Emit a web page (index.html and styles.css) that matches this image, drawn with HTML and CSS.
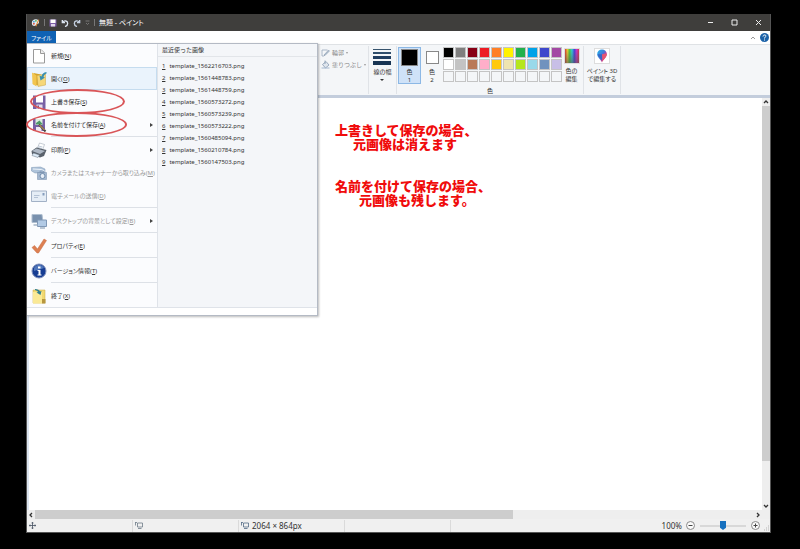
FILE: index.html
```html
<!DOCTYPE html>
<html lang="ja">
<head>
<meta charset="utf-8">
<title>無題 - ペイント</title>
<link rel="stylesheet" href="styles.css">
</head>
<body>
<div class="window">
  <header class="titlebar">
    <svg class="app-icon" width="9" height="9" viewBox="0 0 22 22"><path d="M2 12C2 5 8 2 13 3c6 1 8 6 6 10-2 3-5 1-6 3-1 3-3 4-6 3-3 0-5-3-5-7z" fill="#e4ecf2"/><circle cx="7" cy="9" r="2.2" fill="#47a2d9"/><circle cx="12" cy="7" r="2.2" fill="#4fae52"/><circle cx="7" cy="14" r="2.2" fill="#d9503f"/><path d="M12 20l7-16" stroke="#e58b35" stroke-width="2.5"/></svg>
    <span class="tick"></span>
    <button class="quick" aria-label="上書き保存"><svg width="8" height="8" viewBox="0 0 16 16"><path d="M1 1h14v14H1z" fill="#7b5da6"/><path d="M3 1h10v7H3z" fill="#fff"/><path d="M4 10h8v5H4z" fill="#ded5ea"/></svg></button>
    <button class="quick" aria-label="元に戻す"><svg width="8" height="8" viewBox="0 0 18 18"><path d="M3 2v6h6M3 8c5-6 12-4 12 2 0 4-3 6-6 7" fill="none" stroke="#dce5f1" stroke-width="3"/></svg></button>
    <button class="quick" aria-label="やり直し"><svg width="8" height="8" viewBox="0 0 18 18"><path d="M15 2v6H9M15 8C10 2 3 4 3 10c0 4 3 6 6 7" fill="none" stroke="#c3cfdf" stroke-width="3"/></svg></button>
    <button class="quick" aria-label="カスタマイズ"><svg width="5" height="7" viewBox="0 0 10 14"><path d="M1 4h8M2 8l3 3 3-3" fill="none" stroke="#8d8d8d" stroke-width="1.4"/></svg></button>
    <span class="tick"></span>
    <h1 class="title">無題 - ペイント</h1>
    <div class="window-buttons">
      <button aria-label="最小化"><svg width="7" height="7" viewBox="0 0 7 7"><path d="M1 3.5h5" stroke="#eee"/></svg></button>
      <button aria-label="最大化"><svg width="7" height="7" viewBox="0 0 7 7"><path d="M1 1h5v5H1z" fill="none" stroke="#eee"/></svg></button>
      <button aria-label="閉じる"><svg width="7" height="7" viewBox="0 0 7 7"><path d="M1 1l5 5M6 1L1 6" stroke="#eee"/></svg></button>
    </div>
  </header>

  <div class="tabs">
    <button class="file-tab">ファイル</button>
    <button class="collapse" aria-label="リボンの最小化"><svg width="6" height="6" viewBox="0 0 6 6"><path d="M1 4l2-2 2 2" fill="none" stroke="#999"/></svg></button>
    <button class="help" aria-label="ヘルプ"><svg width="9" height="9" viewBox="0 0 18 18"><circle cx="9" cy="9" r="9" fill="#1b62a8"/><path d="M6 7c0-4 6-4 6-1 0 2-3 2-3 5M9 13v2" fill="none" stroke="#fff" stroke-width="2"/></svg></button>
  </div>

  <div class="ribbon">
    <div class="group shape-group">
      <button class="mini"><svg width="9" height="9" viewBox="0 0 18 18"><path d="M2 4h11M2 4v12h4l8-9" fill="none" stroke="#9aa9bb" stroke-width="1.6"/><path d="M6 14L15 4l2 2-9 9z" fill="#b7c4d3" stroke="#8394a9"/></svg>輪郭<i class="down"></i></button>
      <button class="mini"><svg width="9" height="9" viewBox="0 0 18 18"><path d="M3 9l7-6 6 7-7 6z" fill="#dfe6ee" stroke="#8799b0" stroke-width="1.6"/><path d="M1 15h16v2H1z" fill="#a3b6ce"/><path d="M8 8V1" stroke="#8799b0" stroke-width="1.6"/></svg>塗りつぶし<i class="down"></i></button>
    </div>
    <div class="group line-group">
      <button class="tool"><svg width="18" height="17" viewBox="0 0 18 17"><path d="M0 1.5h18" stroke="#37546d"/><path d="M0 5h18" stroke="#304e6c" stroke-width="2"/><path d="M0 9.500h18" stroke="#203d60" stroke-width="3"/><path d="M0 15h18" stroke="#183453" stroke-width="4"/></svg><span>線の幅</span><i class="down dark"></i></button>
    </div>
    <div class="group color-group">
      <div class="color-tools">
        <button class="tool color-one"><i class="current black"></i><span>色<br>1</span></button>
        <button class="tool color-two"><i class="current white"></i><span>色<br>2</span></button>
        <div class="palette">
          <button class="c1" aria-label="黒"></button><button class="c2" aria-label="灰色"></button><button class="c3" aria-label="暗い赤"></button><button class="c4" aria-label="赤"></button><button class="c5" aria-label="オレンジ"></button><button class="c6" aria-label="黄"></button><button class="c7" aria-label="緑"></button><button class="c8" aria-label="青緑"></button><button class="c9" aria-label="青"></button><button class="c10" aria-label="紫"></button>
          <button class="c11" aria-label="白"></button><button class="c12" aria-label="薄い灰色"></button><button class="c13" aria-label="茶"></button><button class="c14" aria-label="ピンク"></button><button class="c15" aria-label="金"></button><button class="c16" aria-label="薄い黄"></button><button class="c17" aria-label="黄緑"></button><button class="c18" aria-label="水色"></button><button class="c19" aria-label="青灰色"></button><button class="c20" aria-label="薄紫"></button>
          <button aria-label="空き"></button><button aria-label="空き"></button><button aria-label="空き"></button><button aria-label="空き"></button><button aria-label="空き"></button><button aria-label="空き"></button><button aria-label="空き"></button><button aria-label="空き"></button><button aria-label="空き"></button><button aria-label="空き"></button>
        </div>
        <button class="tool edit-color"><i class="spectrum"></i><span>色の<br>編集</span></button>
      </div>
      <span class="group-label">色</span>
    </div>
    <div class="group paint-group">
      <button class="tool"><svg class="paint3d" width="16" height="16" viewBox="0 0 32 32"><defs><linearGradient id="drop" x1="0" y1="0" x2="1" y2="1"><stop offset="0" stop-color="#20b8ed"/><stop offset=".45" stop-color="#4279d8"/><stop offset=".6" stop-color="#b53ea9"/><stop offset="1" stop-color="#ed6947"/></linearGradient></defs><path d="M16 31C14 24 5 20 5 12a11 11 0 0122 0c0 8-9 12-11 19z" fill="url(#drop)"/><path d="M16 12l11-2c0 9-7 13-10 18z" fill="#e45672"/><path d="M6 12h10v15C13 21 7 18 6 12z" fill="#3568c6"/></svg><span>ペイント 3D<br>で編集する</span></button>
    </div>
  </div>

  <main class="workspace">
    <div class="canvas">
      <div class="note note-save">上書きして保存の場合、<br><span class="second">元画像は消えます</span></div>
      <div class="note note-as">名前を付けて保存の場合、<br><span class="second">元画像も残します。</span></div>
    </div>
    <div class="vscroll">
      <button aria-label="上へ"><svg width="6" height="6" viewBox="0 0 6 6"><path d="M1 4l2-2 2 2" fill="none" stroke="#333" stroke-width="1.3"/></svg></button>
      <div class="vthumb"></div>
      <button aria-label="下へ"><svg width="6" height="6" viewBox="0 0 6 6"><path d="M1 2l2 2 2-2" fill="none" stroke="#333" stroke-width="1.3"/></svg></button>
    </div>
    <div class="hscroll">
      <button aria-label="左へ"><svg width="6" height="6" viewBox="0 0 6 6"><path d="M4 1L2 3l2 2" fill="none" stroke="#333" stroke-width="1.3"/></svg></button>
      <div class="hthumb"></div>
      <button aria-label="右へ"><svg width="6" height="6" viewBox="0 0 6 6"><path d="M2 1l2 2-2 2" fill="none" stroke="#333" stroke-width="1.3"/></svg></button>
    </div>
  </main>

  <footer class="status">
    <div class="cell"><svg width="7" height="7" viewBox="0 0 14 14"><path d="M7 0v14M0 7h14M5 2h4M5 12h4M2 5v4M12 5v4" stroke="#465262" stroke-width="1.6"/></svg></div>
    <div class="cell"><svg width="8" height="7" viewBox="0 0 16 14"><path d="M5 2h10v8H5zM1 1v6M0 1h4M6 13h7" fill="none" stroke="#667482" stroke-width="1.5"/></svg></div>
    <div class="cell"><svg width="8" height="7" viewBox="0 0 16 14"><path d="M5 2h10v8H5zM1 1v6M0 1h4M6 13h7" fill="none" stroke="#49637f" stroke-width="1.5"/></svg><span>2064 × 864px</span></div>
    <div class="cell"></div>
    <div class="zoom">
      <label for="zoom">100%</label>
      <button aria-label="縮小"><svg width="9" height="9" viewBox="0 0 9 9"><circle cx="4.500" cy="4.500" r="4" fill="#fafafa" stroke="#8a8a8a"/><path d="M2.500 4.500h4" stroke="#444"/></svg></button>
      <input id="zoom" type="range" min="0" max="100" value="50">
      <button aria-label="拡大"><svg width="9" height="9" viewBox="0 0 9 9"><circle cx="4.500" cy="4.500" r="4" fill="#fafafa" stroke="#8a8a8a"/><path d="M2.500 4.500h4M4.500 2.500v4" stroke="#444"/></svg></button>
      <svg class="grip" width="6" height="6" viewBox="0 0 6 6"><path d="M4 1h1M2 3h1M4 3h1M0 5h1M2 5h1M4 5h1" stroke="#b5b5b5"/></svg>
    </div>
  </footer>

  <div class="file-menu">
    <nav class="commands">
      <button><svg viewBox="0 0 32 32"><path d="M5 3h15l7 7v20H5z" fill="#fff" stroke="#999" stroke-width="2"/><path d="M19 3v8h8" fill="#eee" stroke="#999" stroke-width="2"/></svg><span>新規(<u>N</u>)</span></button>
      <button class="selected"><svg viewBox="0 0 32 32"><path d="M5 4l15 3v23L5 27z" fill="#d6a428"/><path d="M12 9l17-3v22l-15 3z" fill="#f6d779" stroke="#c9a345"/><path d="M2 3l9 6v22l-8-5z" fill="#f2c550"/><path d="M31 2c-6 1-9 4-10 9l-4-2 2 10 9-6-3-1c1-4 3-6 6-7z" fill="#398fae"/></svg><span>開く(<u>O</u>)</span></button>
      <button class="circled"><svg viewBox="0 0 32 32"><path d="M4 3h25v27H4z" fill="#7860a5"/><path d="M10 3h14v14H10z" fill="#fff"/><path d="M11 21h12v9H11z" fill="#e4dfee"/><path d="M13 23h3v6h-3z" fill="#67518f"/></svg><span>上書き保存(<u>S</u>)</span></button>
      <button class="circled wide"><svg viewBox="0 0 32 32"><path d="M4 4h24v24H4z" fill="#7860a5"/><path d="M9 4h14v12H9z" fill="#dceee0"/><path d="M10 12l7-5 7 8H10z" fill="#4d9968"/><path d="M10 20h11v8H10z" fill="#eeeaf4"/><path d="M16 15l13 14" stroke="#4c4542" stroke-width="4"/><path d="M17 16l10 10" stroke="#e8b05c" stroke-width="2"/></svg><span>名前を付けて保存(<u>A</u>)</span><i class="arrow"></i></button>
      <hr>
      <button><svg viewBox="0 0 32 32"><path d="M12 14l5-12 10 3-4 11z" fill="#fff" stroke="#919cab"/><path d="M15 8l8 2M14 11l8 2" stroke="#8299b5"/><path d="M1 18l10-7 20 5-5 12-8 3-16-7z" fill="#59616b"/><path d="M2 18l9-5 17 5-10 6z" fill="#aeb8c5"/><path d="M5 22l12 4-3 5-12-4z" fill="#dceaf6" stroke="#687584"/></svg><span>印刷(<u>P</u>)</span><i class="arrow"></i></button>
      <button class="disabled"><svg viewBox="0 0 32 32"><path d="M1 5l18-1 9 4v7l-20 1-7-4z" fill="#aec3da" stroke="#7892b0"/><path d="M4 8l17 1 6 3" stroke="#eef4fa" stroke-width="2" fill="none"/><path d="M13 15h18v14H13zM18 12h7v3h-7z" fill="#a4b8d0" stroke="#728ba9"/><circle cx="23" cy="22" r="5" fill="#e7eef7" stroke="#718dad" stroke-width="2"/></svg><span>カメラまたはスキャナーから取り込み(<u>M</u>)</span></button>
      <button class="disabled"><svg viewBox="0 0 32 32"><path d="M1 6h30v21H1z" fill="#e5edf6" stroke="#a2b1c6" stroke-width="2"/><path d="M6 15h11M6 19h8" stroke="#b4c2d5" stroke-width="2"/><path d="M23 10h4v5h-4z" fill="#859dbd"/></svg><span>電子メールの送信(<u>D</u>)</span></button>
      <hr>
      <button class="disabled"><svg viewBox="0 0 32 32"><path d="M2 3h20l2 16H2z" fill="#7890ad" stroke="#b0bfd0" stroke-width="2"/><path d="M13 14h18v13H13z" fill="#b2cae5" stroke="#8098b6" stroke-width="2"/><path d="M5 24h8M18 30h10" stroke="#a5b4c6" stroke-width="3"/></svg><span>デスクトップの背景として設定(<u>B</u>)</span><i class="arrow"></i></button>
      <hr>
      <button><svg viewBox="0 0 32 32"><path d="M2 19l5-4 6 7L26 2l5 3-16 25h-3z" fill="#dd8052" stroke="#c66b42"/></svg><span>プロパティ(<u>E</u>)</span></button>
      <hr>
      <button><svg viewBox="0 0 32 32"><circle cx="16" cy="16" r="14" fill="#173d93" stroke="#8291ba" stroke-width="2"/><path d="M6 10c5-9 16-8 20 0-7 3-13 4-20 6z" fill="#4e75ba"/><path d="M14 14h5v9h2v2h-8v-2h2v-7h-2v-2zM14 7h5v4h-5z" fill="#fff"/></svg><span>バージョン情報(<u>T</u>)</span></button>
      <hr>
      <button><svg viewBox="0 0 32 32"><path d="M4 4h24v26H4z" fill="#f1d972" stroke="#c5a842"/><path d="M4 8h18v23H4z" fill="#fae995"/><path d="M8 2c5 0 9 2 10 5l3-1-2 8-8-5 3-1c-1-2-3-3-6-4z" fill="#317f91"/><path d="M22 22h7v9h-7z" fill="#b7963e"/></svg><span>終了(<u>X</u>)</span></button>
    </nav>
    <section class="recent">
      <h2>最近使った画像</h2>
      <ol>
        <li><a href="#"><u>1</u>template_1562216703.png</a></li>
        <li><a href="#"><u>2</u>template_1561448783.png</a></li>
        <li><a href="#"><u>3</u>template_1561448759.png</a></li>
        <li><a href="#"><u>4</u>template_1560573272.png</a></li>
        <li><a href="#"><u>5</u>template_1560573239.png</a></li>
        <li><a href="#"><u>6</u>template_1560573222.png</a></li>
        <li><a href="#"><u>7</u>template_1560485094.png</a></li>
        <li><a href="#"><u>8</u>template_1560210784.png</a></li>
        <li><a href="#"><u>9</u>template_1560147503.png</a></li>
      </ol>
    </section>
    <div class="menu-foot"></div>
  </div>
</div>
</body>
</html>
```
FILE: styles.css
```css
*, *::before, *::after { box-sizing: border-box; }
body {
  margin: 0;
  min-height: 100vh;
  padding: 14px 29px 16px 26px;
  display: flex;
  background: #000;
  color: #333;
  font: 6px/10px "Noto Sans", "Noto Sans CJK JP", sans-serif;
}
button {
  border: 0;
  padding: 0;
  background: none;
  color: inherit;
  font: inherit;
}
svg, i { display: block; flex: none; }
.window {
  position: relative;
  flex: 1;
  min-width: 0;
  display: flex;
  flex-direction: column;
  background: #fff;
  border: 1px solid #555;
  border-top: 0;
}

.titlebar {
  height: 17px;
  display: flex;
  align-items: center;
  gap: 4px;
  padding-left: 4px;
  background: #3f3e3c;
  color: #fff;
}
.tick { width: 1px; height: 7px; background: #777; }
.title { margin: 0; font-size: 7px; font-weight: 400; font-feature-settings: "palt"; }
.window-buttons { margin-left: auto; display: flex; }
.window-buttons button { width: 24px; height: 17px; display: grid; place-items: center; }

.tabs {
  height: 13px;
  display: flex;
  align-items: center;
  gap: 4px;
  padding-right: 1px;
}
.file-tab {
  width: 29px;
  height: 13px;
  margin-right: auto;
  background: #0f62b4;
  color: #fff;
  font-feature-settings: "palt";
}

.ribbon {
  height: 54px;
  display: flex;
  padding: 1px 0 1px 291px;
  background: #f4f6f8;
  border-top: 1px solid #dfe2e5;
  border-bottom: 3px solid #c3cddc;
  line-height: 8px;
}
.group { border-right: 1px solid #e0e3e7; }
.shape-group {
  width: 51px;
  display: flex;
  flex-direction: column;
  gap: 3px;
  padding: 2px 0 0 3px;
  color: #888;
}
.mini { display: flex; align-items: center; gap: 2px; white-space: nowrap; }
.down { border: 1px solid transparent; border-top: 2px solid #999; border-bottom: 0; }
.down.dark { border-width: 2px 2px 0; border-top-color: #333; }
.line-group { width: 28px; display: flex; justify-content: center; }
.tool {
  display: flex;
  flex-direction: column;
  align-items: center;
  justify-content: flex-start;
  gap: 3px;
  padding-top: 2px;
  white-space: nowrap;
}
.color-group { width: 187px; text-align: center; }
.color-tools { display: flex; gap: 1px; padding: 1px 0 0 1px; height: 40px; }
.color-one { width: 23px; height: 37px; padding-top: 1px; gap: 2px; background: #cfe2f8; border: 1px solid #8cb8e5; }
.color-two { width: 20px; height: 37px; padding-top: 4px; gap: 4px; }
.current { width: 17px; height: 17px; border: 1px solid #888; }
.black { background: #000; }
.white { width: 13px; height: 13px; background: #fff; }
.palette {
  display: grid;
  grid-template-columns: repeat(10, 11px);
  grid-auto-rows: 11px;
  gap: 1px;
  align-content: start;
}
.palette button { border: 1px solid #c4c4c4; }
.palette .c1 { background: #000; }
.palette .c2 { background: #7f7f7f; }
.palette .c3 { background: #880015; }
.palette .c4 { background: #ed1c24; }
.palette .c5 { background: #ff7f27; }
.palette .c6 { background: #fff200; }
.palette .c7 { background: #22b14c; }
.palette .c8 { background: #00a2e8; }
.palette .c9 { background: #3f48cc; }
.palette .c10 { background: #a349a4; }
.palette .c11 { background: #fff; }
.palette .c12 { background: #c3c3c3; }
.palette .c13 { background: #b97a57; }
.palette .c14 { background: #ffaec9; }
.palette .c15 { background: #ffc90e; }
.palette .c16 { background: #efe4b0; }
.palette .c17 { background: #b5e61d; }
.palette .c18 { background: #99d9ea; }
.palette .c19 { background: #7092be; }
.palette .c20 { background: #c8bfe7; }
.spectrum {
  width: 16px;
  height: 16px;
  border: 1px solid #ddd;
  background: linear-gradient(transparent, #5559), linear-gradient(90deg, #d33, #ec3, #4c4, #3cd, #44d, #c3c, #d34);
}
.edit-color { width: 17px; padding-top: 1px; }
.group-label { display: block; padding-top: 1px; }
.paint-group { width: 37px; display: flex; justify-content: center; }
.paint-group .tool { font-feature-settings: "palt"; }
.paint3d { background: #fff; border: 1px solid #ddd; }

.workspace {
  flex: 1;
  display: grid;
  grid-template-columns: 1fr 8px;
  grid-template-rows: 1fr 9px;
  background: #eee;
}
.canvas { position: relative; background: #fff; border-left: 2px solid #dce4ef; }
.note {
  position: absolute;
  color: #f00c0c;
  font: 900 13px/14px "Noto Sans CJK JP", sans-serif;
  white-space: nowrap;
}
.note-save { left: 306px; top: 25px; }
.note-as { left: 306px; top: 81px; }
.second { padding-left: 18px; }
.note-as .second { padding-left: 24px; }
.vscroll { display: flex; flex-direction: column; }
.vscroll button { height: 8px; display: grid; place-items: center; }
.vthumb { flex: 0 1 355px; margin-bottom: auto; background: #cdcdcd; }
.hscroll { display: flex; }
.hscroll button { width: 8px; display: grid; place-items: center; }
.hthumb { width: 65%; margin-right: auto; background: #cdcdcd; }

.status {
  height: 13px;
  display: flex;
  align-items: center;
  background: #f0f0f0;
  font-size: 8px;
}
.cell {
  flex: 0 1 106px;
  height: 12px;
  display: flex;
  align-items: center;
  gap: 3px;
  padding-left: 2px;
  border-right: 1px solid #dadada;
}
.zoom { margin-left: auto; display: flex; align-items: center; gap: 4px; }
.zoom input {
  appearance: none;
  width: 46px;
  height: 9px;
  margin: 0 1px;
  background: linear-gradient(#d8d8d8, #d8d8d8) center / 100% 2px no-repeat;
}
.zoom input::-webkit-slider-thumb {
  appearance: none;
  width: 6px;
  height: 9px;
  background: #1670be;
  clip-path: polygon(0 0, 100% 0, 100% 75%, 50% 100%, 0 75%);
}
.grip { align-self: flex-end; }

.file-menu {
  position: absolute;
  left: 0;
  top: 29px;
  width: 291px;
  display: grid;
  grid-template-columns: 131px 1fr;
  background: #fbfcfe;
  border: 1px solid #b4bac4;
  border-left: 0;
  box-shadow: 1px 1px 2px #0004;
}
.commands { border-right: 1px solid #dfe3e9; }
.commands button {
  position: relative;
  width: 100%;
  height: 23px;
  display: flex;
  align-items: center;
  gap: 4px;
  padding: 0 4px;
  text-align: left;
  font-feature-settings: "palt";
  white-space: nowrap;
}
.commands button > svg { width: 16px; height: 16px; }
.commands .selected { background: #eaf3fc; box-shadow: inset 0 0 0 1px #c5dcef; }
.commands .disabled { color: #999; }
.commands hr { height: 1px; margin: 0 0 1px 24px; border: 0; background: #dde1e7; }
.arrow { margin-left: auto; border: 2px solid transparent; border-left: 3px solid #444; border-right: 0; }
.circled::after {
  content: "";
  position: absolute;
  left: 3px;
  top: -1px;
  width: 95px;
  height: 25px;
  border: 2px solid #d95558;
  border-radius: 50%;
}
.commands .wide::after { left: -1px; width: 101px; }
.recent { background: #f4f6f9; }
.recent h2 {
  margin: 0;
  padding: 0 4px;
  border-bottom: 1px solid #e2e5e9;
  font-size: 6px;
  font-weight: 400;
  line-height: 12px;
}
.recent ol { margin: 0; padding: 3px 4px; list-style: none; }
.recent li { height: 12px; line-height: 12px; }
.recent a { display: flex; gap: 4px; color: inherit; text-decoration: none; }
.menu-foot { grid-column: 1 / -1; height: 8px; background: #fff; border-top: 1px solid #dfe3e9; }
```
